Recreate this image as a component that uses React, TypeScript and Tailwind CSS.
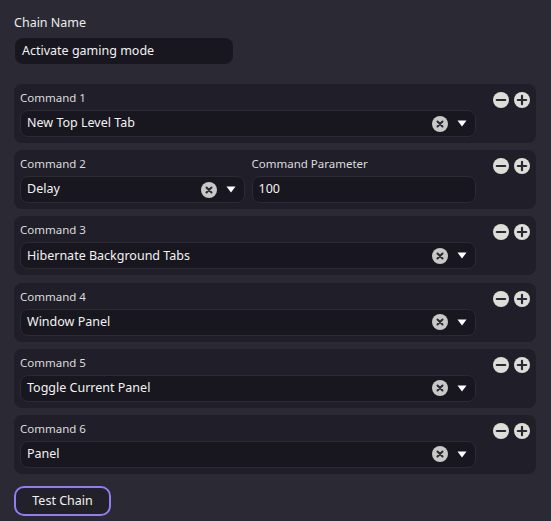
import React from "react";

const font = { fontFamily: '"Noto Sans", "Open Sans", sans-serif' };

function ClearIcon() {
  return (
    <svg width="16" height="16" viewBox="0 0 16 16" className="shrink-0">
      <circle cx="8" cy="8" r="8" fill="#c8c8c6" />
      <path d="M5.5 5.5 L10.5 10.5 M10.5 5.5 L5.5 10.5" stroke="#2a2933" strokeWidth="2" strokeLinecap="round" />
    </svg>
  );
}

function Caret() {
  return (
    <svg width="10" height="7" viewBox="0 0 10 7" className="shrink-0">
      <path d="M0.5 0.5 L9.5 0.5 L5 6.5 Z" fill="#ffffff" />
    </svg>
  );
}

function CircleBtn({ plus }: { plus?: boolean }) {
  return (
    <svg width="16" height="16" viewBox="0 0 16 16">
      <circle cx="8" cy="8" r="8" fill="#deded9" />
      <path d="M3.8 8 H12.2" stroke="#2a2933" strokeWidth="2.2" strokeLinecap="round" />
      {plus && <path d="M8 3.8 V12.2" stroke="#2a2933" strokeWidth="2.2" strokeLinecap="round" />}
    </svg>
  );
}

function Select({ value }: { value: string }) {
  return (
    <div className="flex h-[27px] items-center rounded-[8px] border border-[#2c2b34] bg-[#18171f] pl-[6px] pr-[8px]">
      <span className="flex-1 text-[12.5px] text-[#f2f2f2]">{value}</span>
      <div className="flex items-center gap-[9px]">
        <ClearIcon />
        <Caret />
      </div>
    </div>
  );
}

function Card({ children }: { children: React.ReactNode }) {
  return (
    <div className="flex rounded-[8px] bg-[#201f29] pl-[6px] pt-[4px] pb-[6px]">
      <div className="flex-1">{children}</div>
      <div className="ml-[17px] mr-[6px] mt-[4px] flex gap-[5px] self-start">
        <CircleBtn />
        <CircleBtn plus />
      </div>
    </div>
  );
}

function Label({ children }: { children: React.ReactNode }) {
  return <div className="h-[22px] pt-[1px] text-[11.5px] leading-[18px] text-[#dcdcdc]">{children}</div>;
}

export default function App() {
  const cmds = [
    "New Top Level Tab",
    null,
    "Hibernate Background Tabs",
    "Window Panel",
    "Toggle Current Panel",
    "Panel",
  ];
  return (
    <div className="min-h-[521px] w-[551px] bg-[#2a2934] px-[14px] pb-[6px] pt-[14px]" style={font}>
      <div className="text-[12.5px] leading-[18px] text-[#ececec]">Chain Name</div>
      <div className="mt-[5px] flex h-[28px] w-[220px] items-center rounded-[9px] border border-[#2c2b34] bg-[#18171f] px-[7px] text-[12.5px] text-[#f2f2f2]">
        Activate gaming mode
      </div>
      <div className="mt-[19px] flex w-[522px] flex-col gap-[7.2px]">
        {cmds.map((c, i) => (
          <Card key={i}>
            {c === null ? (
              <div className="grid grid-cols-2 gap-[7px]">
                <div>
                  <Label>Command {i + 1}</Label>
                  <Select value="Delay" />
                </div>
                <div>
                  <Label>Command Parameter</Label>
                  <div className="flex h-[27px] items-center rounded-[8px] border border-[#2c2b34] bg-[#18171f] px-[6px] text-[12.5px] text-[#f2f2f2]">
                    100
                  </div>
                </div>
              </div>
            ) : (
              <>
                <Label>Command {i + 1}</Label>
                <Select value={c} />
              </>
            )}
          </Card>
        ))}
      </div>
      <button className="mt-[12px] flex h-[30px] w-[97px] items-center justify-center rounded-[10px] border-2 border-[#8d7ff0] bg-[#22212a] text-[12.5px] text-[#f2f2f2]">
        Test Chain
      </button>
    </div>
  );
}
